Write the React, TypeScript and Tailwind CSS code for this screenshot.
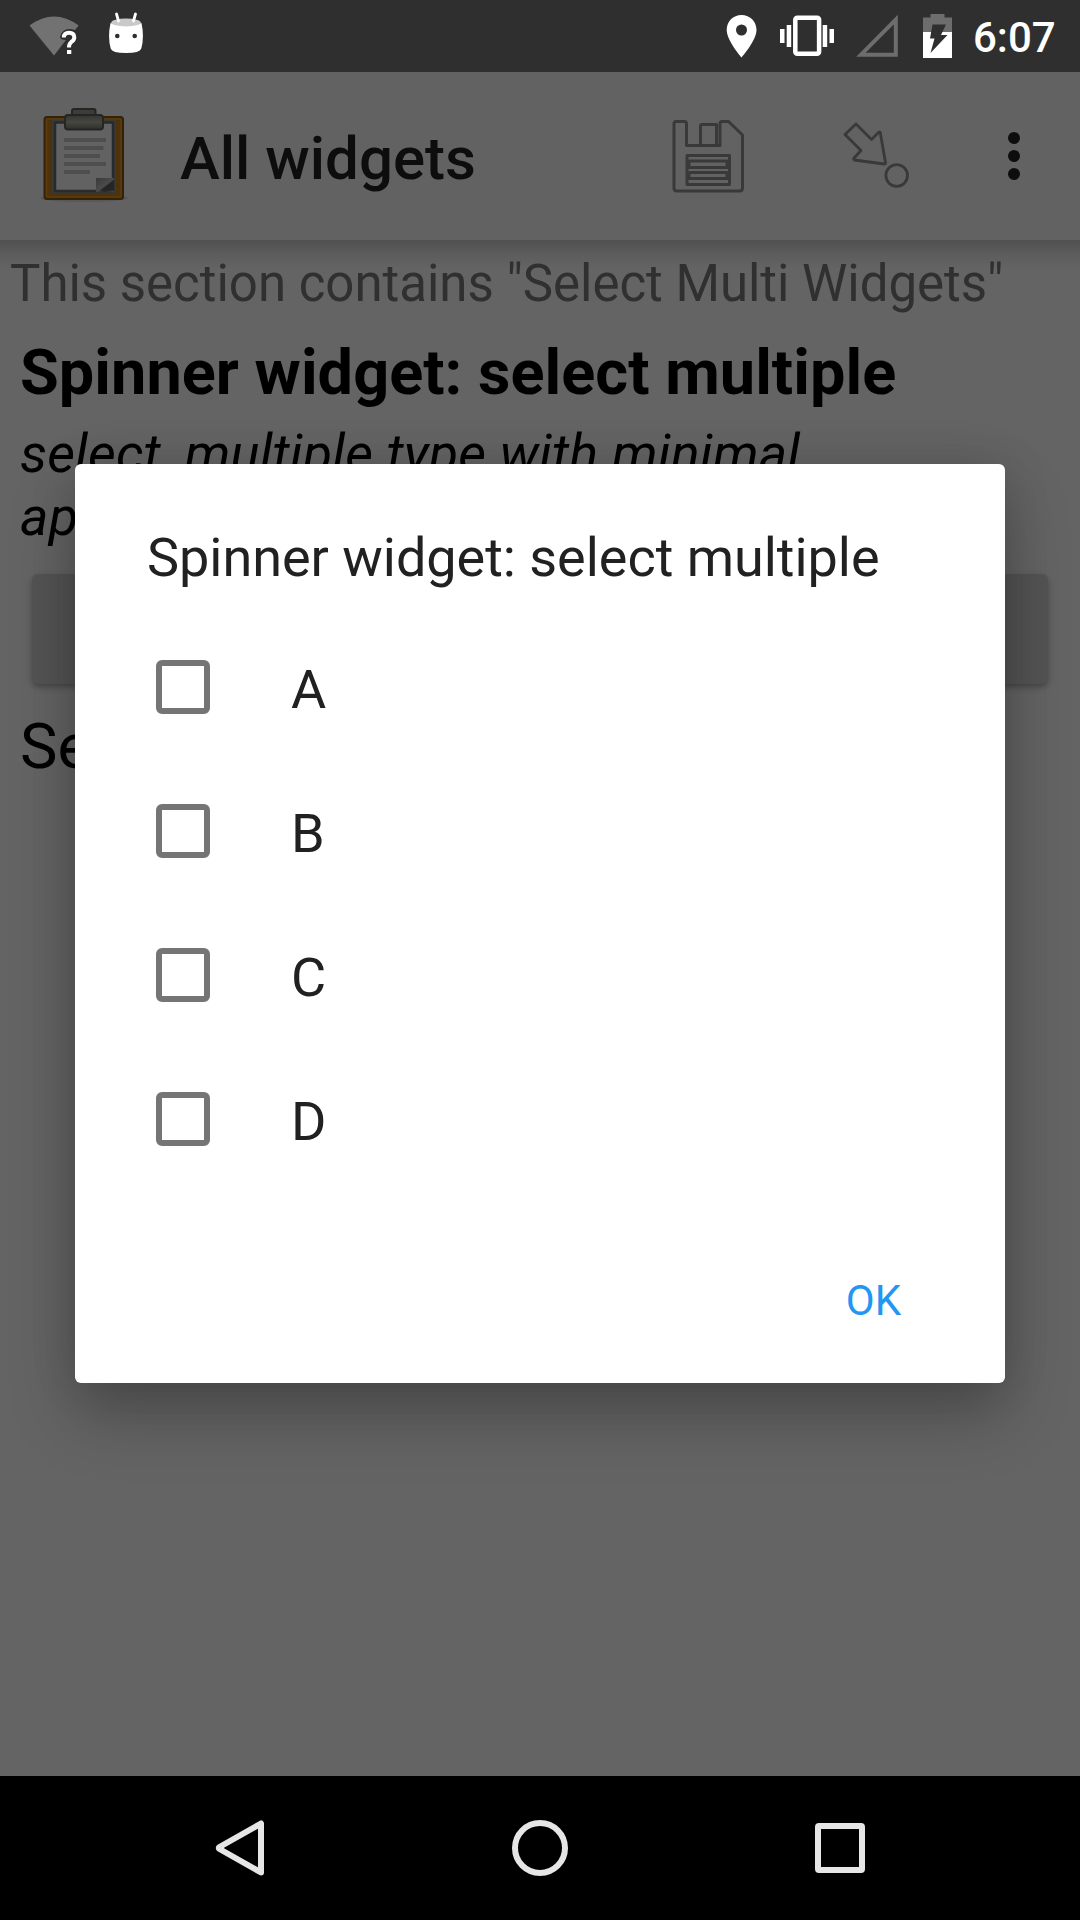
import React from "react";

function StatusBar() {
  return (
    <header className="flex h-[72px] items-center justify-between bg-[#2f2f2f] text-white">
      <svg width="200" height="72" viewBox="0 0 200 72">
        <path d="M29.5 25.5Q54 7.500 78.700 25.500L75 30Q63 26 60 37Q60 40 66 40L54 55.500Z" fill="#727272" />
        <path d="M63.800 37.500Q64 32.700 69 32.700Q74.300 32.700 74.300 37.200Q74.300 40.200 71 42.300Q69 43.700 69 47.500" fill="none" stroke="#fff" strokeWidth="4" />
        <rect x="67" y="50" width="4.300" height="4" fill="#fff" />
        <path d="M110.500 23Q126 28 141.500 23Q144.500 37 141.300 48.500Q140 53 126 53Q112 53 110.700 48.500Q107.500 37 110.500 23Z" fill="#fff" />
        <ellipse cx="126" cy="22.500" rx="14.800" ry="3.900" fill="#c9c9c9" />
        <path d="M116.500 14L118.500 21M135.500 14L133.500 21" stroke="#fff" strokeWidth="2.800" strokeLinecap="round" />
        <circle cx="117.300" cy="36" r="2.300" fill="#2f2f2f" />
        <circle cx="134.700" cy="36" r="2.300" fill="#2f2f2f" />
      </svg>
      <div className="flex items-center">
        <svg width="252" height="72" viewBox="720 0 252 72">
          <path fillRule="evenodd" d="M741.500 15C733 15 726.700 21.500 726.700 30C726.700 40.500 741.500 57.500 741.500 57.500S756.500 40.500 756.500 30C756.500 21.500 750 15 741.500 15ZM741.500 24.500A5.500 5.500 0 1 1 741.500 35.500A5.500 5.500 0 0 1 741.500 24.500Z" fill="#fff" />
          <path d="M780 29h4.500v14H780zM786.700 25h4.500v22h-4.500zM822.700 25h4.500v22h-4.500zM829.500 29h4.500v14h-4.500z" fill="#fff" />
          <rect x="795.300" y="17.800" width="23.800" height="36" rx="2" fill="none" stroke="#fff" strokeWidth="4.500" />
          <path d="M861 54.700H895.800V19.500Z" fill="none" stroke="#6d6d6d" strokeWidth="4" />
          <path d="M923 17.500h7.500V14h14v3.500H952V32.500H923z" fill="#6d6d6d" />
          <path d="M923 32h29v26h-29z" fill="#fff" />
          <path d="M932.500 24.500h13.500L941 35H947.500L930.500 53L934.500 38.500H930z" fill="#2f2f2f" />
        </svg>
        <span className="mr-6 w-[84px] pt-[3px] pl-[1px] text-[42px] leading-[48px] font-medium">6:07</span>
      </div>
    </header>
  );
}

function ClipboardIcon() {
  return (
    <svg className="ml-9 shrink-0" width="96" height="168" viewBox="36 72 96 168">
      <defs>
        <linearGradient id="clip" x1="0" y1="0" x2="0" y2="1">
          <stop offset="0" stopColor="#343431" />
          <stop offset=".5" stopColor="#464741" />
          <stop offset="1" stopColor="#2e2e2a" />
        </linearGradient>
        <linearGradient id="fold" x1="0" y1="0" x2="1" y2="1">
          <stop offset="0" stopColor="#393939" />
          <stop offset=".5" stopColor="#4b4b4b" />
          <stop offset=".7" stopColor="#292929" />
          <stop offset="1" stopColor="#444" />
        </linearGradient>
      </defs>
      <ellipse cx="84" cy="198" rx="44" ry="4" fill="#585858" />
      <rect x="44.500" y="117" width="78.500" height="82" rx="2.500" fill="#4d320b" stroke="#33220a" strokeWidth="2" />
      <rect x="46.500" y="119" width="74.500" height="78" rx="1" fill="none" stroke="#5c3c0d" strokeWidth="1.500" />
      <rect x="52" y="120" width="64" height="73.500" fill="#393938" />
      <rect x="55" y="122.500" width="58" height="68.500" fill="#626262" stroke="#272b2e" strokeWidth="2.500" />
      <path d="M64 138h42v4H64zM64 146h39.500v4H64zM64 154h36v4H64zM64 162h42v4H64zM64 170h26v4H64z" fill="#4e4e4e" />
      <path d="M96 178h18v14H96z" fill="url(#fold)" />
      <path d="M100 190.500L114 180V190.500Z" fill="#252525" />
      <path d="M72 116v-5q0-2 2-2h19.500q2 0 2 2v5" fill="#3c3d38" stroke="#252624" strokeWidth="2" />
      <rect x="65" y="115" width="38" height="14.500" rx="3" fill="url(#clip)" stroke="#252624" strokeWidth="2" />
    </svg>
  );
}

function AppBar() {
  return (
    <div className="flex h-[168px] items-center bg-[#626262]">
      <ClipboardIcon />
      <h1 className="ml-12 flex-1 pt-[5px] text-[60px] leading-[70px] font-medium text-[#0d0d0d]">All widgets</h1>
      <svg className="shrink-0" width="440" height="168" viewBox="640 72 440 168">
        <g fill="none" stroke="#393939" strokeWidth="3" strokeLinejoin="round">
          <path d="M676 121.500H684.500Q686.500 121.500 686.500 123.500V145.500H720V123.500Q720 121.500 722 121.500H728.500L742.500 135V188Q742.500 191 739.500 191H677Q674 191 674 188V124Q674 121.500 676 121.500Z" />
          <path d="M700.500 144.500V126Q700.500 124.500 702 124.500H716.500V144.500" />
          <path d="M687 155.500H729.500V184.500H687zM689 161H727V167.500H689zM689 172.500H727V178.500H689z" />
          <path d="M845 134.500L856 124L871.500 139.500L879 132Q880.500 131.500 880.500 134L885.500 162.500Q885.500 164 884 164L854.500 160Q853 159.500 854 158L861 150.500Z" strokeWidth="2.800" />
          <circle cx="896.700" cy="175.500" r="10.800" strokeWidth="2.800" />
        </g>
        <g fill="#0d0d0d">
          <circle cx="1014" cy="138" r="6" />
          <circle cx="1014" cy="156" r="6" />
          <circle cx="1014" cy="174" r="6" />
        </g>
      </svg>
    </div>
  );
}

function FormPage() {
  return (
    <main className="h-[1536px] bg-[#646464] bg-[linear-gradient(#505050,#5c5c5c_14px,#646464_29px)] bg-[length:100%_29px] bg-no-repeat text-black">
      <p className="pt-[14px] pl-[10px] text-[51px] leading-[60px] tracking-[-0.02px] whitespace-nowrap text-[#303030]">
        This section contains "Select Multi Widgets"
      </p>
      <h2 className="mt-[22px] pl-5 text-[63px] leading-[74px] font-bold tracking-[0.04px] whitespace-nowrap">
        Spinner widget: select multiple
      </h2>
      <p className="mt-3 pl-5 text-[54px] leading-[63px] tracking-[0.15px] italic">
        select_multiple type with minimal
        <br />
        appearance
      </p>
      <div className="mx-8 mt-[26px] h-[110px] rounded-[6px] bg-[#545454] shadow-[0_3px_6px_rgba(0,0,0,0.3)]" />
      <p className="mt-[26px] pl-5 text-[63px] leading-[74px]">Selected:</p>
    </main>
  );
}

function Option({ label }: { label: string }) {
  return (
    <label className="flex h-36 items-center">
      <span className="ml-[81px] size-[54px] rounded-[6px] border-6 border-[#757575]" />
      <span className="ml-[81px] pt-[6px] text-[54px] leading-[64px]">{label}</span>
    </label>
  );
}

function SelectDialog() {
  return (
    <section
      role="dialog"
      className="absolute top-[464px] left-[75px] flex h-[919px] w-[930px] flex-col rounded-[6px] bg-white text-[#212121] shadow-[0_32px_64px_rgba(0,0,0,0.25),0_0_48px_rgba(0,0,0,0.12)]"
    >
      <h3 className="mt-[62px] mb-[25px] pl-[72px] text-[54px] leading-[64px] tracking-[-0.03px] whitespace-nowrap">
        Spinner widget: select multiple
      </h3>
      {["A", "B", "C", "D"].map((label) => (
        <Option key={label} label={label} />
      ))}
      <button className="mt-[63px] mr-[104px] self-end pt-[22px] text-[42px] leading-[50px] text-[#2196f3]">OK</button>
    </section>
  );
}

function NavigationBar() {
  return (
    <nav className="h-36 bg-black">
      <svg width="1080" height="144" viewBox="0 1776 1080 144" fill="none" stroke="#e6e6e6" strokeWidth="6" strokeLinejoin="round">
        <path d="M261 1823.500V1872.500L219.500 1849Q218 1848 219.500 1847Z" />
        <circle cx="540" cy="1848" r="25" />
        <rect x="818" y="1826" width="44" height="44" rx="1" />
      </svg>
    </nav>
  );
}

export default function App() {
  return (
    <div className="relative h-[1920px] w-[1080px] overflow-hidden font-['Roboto',sans-serif]">
      <StatusBar />
      <AppBar />
      <FormPage />
      <NavigationBar />
      <SelectDialog />
    </div>
  );
}
